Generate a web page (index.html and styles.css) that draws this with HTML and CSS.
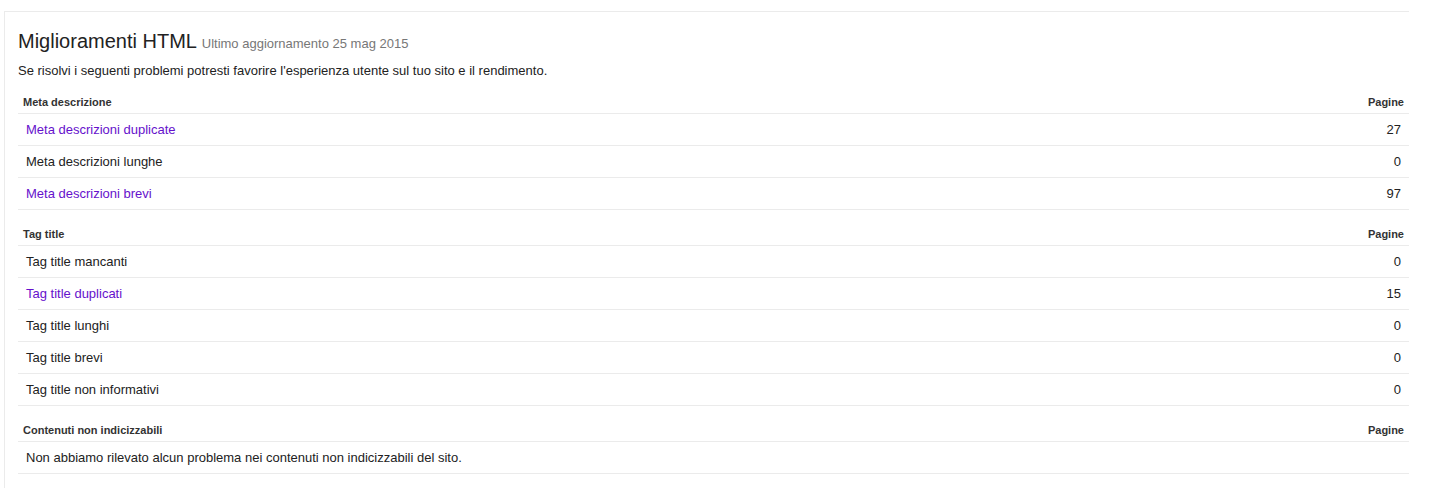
FILE: index.html
```html
<!DOCTYPE html>
<html lang="it">
<head>
    <meta charset="UTF-8">
    <title>Miglioramenti HTML</title>
    <link rel="stylesheet" href="styles.css">
</head>
<body>
    <div class="panel">
        <h2 class="title">Miglioramenti HTML <span class="updated">Ultimo aggiornamento 25 mag 2015</span></h2>
        <p class="intro">Se risolvi i seguenti problemi potresti favorire l'esperienza utente sul tuo sito e il rendimento.</p>

        <table class="issues">
            <thead>
                <tr><th>Meta descrizione</th><th class="num">Pagine</th></tr>
            </thead>
            <tbody>
                <tr><td><a href="#">Meta descrizioni duplicate</a></td><td class="num">27</td></tr>
                <tr><td>Meta descrizioni lunghe</td><td class="num">0</td></tr>
                <tr><td><a href="#">Meta descrizioni brevi</a></td><td class="num">97</td></tr>
            </tbody>
        </table>

        <table class="issues">
            <thead>
                <tr><th>Tag title</th><th class="num">Pagine</th></tr>
            </thead>
            <tbody>
                <tr><td>Tag title mancanti</td><td class="num">0</td></tr>
                <tr><td><a href="#">Tag title duplicati</a></td><td class="num">15</td></tr>
                <tr><td>Tag title lunghi</td><td class="num">0</td></tr>
                <tr><td>Tag title brevi</td><td class="num">0</td></tr>
                <tr><td>Tag title non informativi</td><td class="num">0</td></tr>
            </tbody>
        </table>

        <table class="issues">
            <thead>
                <tr><th>Contenuti non indicizzabili</th><th class="num">Pagine</th></tr>
            </thead>
            <tbody>
                <tr><td colspan="2">Non abbiamo rilevato alcun problema nei contenuti non indicizzabili del sito.</td></tr>
            </tbody>
        </table>
    </div>
</body>
</html>
```

FILE: styles.css
```css
body {
    margin: 0;
    font-family: "Liberation Sans", Arial, sans-serif;
    color: #222;
    background-color: #fff;
}

.panel {
    margin: 11px 0 0 4px;
    width: 1391px;
    padding: 17px 0 0 13px;
    border-top: 1px solid #ebebeb;
    border-left: 1px solid #ebebeb;
    min-height: 459px;
}

.title {
    margin: 0;
    font-size: 20px;
    font-weight: normal;
    line-height: 24px;
    color: #222;
}

.updated {
    font-size: 13px;
    color: #777;
}

.intro {
    margin: 7px 0 0;
    font-size: 13px;
    line-height: 16px;
}

.issues {
    width: 1391px;
    margin-top: 13px;
    border-collapse: collapse;
    font-size: 13px;
}

.intro + .issues {
    margin-top: 12px;
}

.issues th {
    height: 22px;
    padding: 0 5px;
    font-size: 11px;
    font-weight: bold;
    color: #333;
    text-align: left;
    vertical-align: middle;
    border-bottom: 1px solid #ebebeb;
}

.issues td {
    height: 31px;
    padding: 0 8px;
    vertical-align: middle;
    border-bottom: 1px solid #ebebeb;
}

.issues .num {
    text-align: right;
}

.issues a {
    color: #61c;
    text-decoration: none;
}
```
